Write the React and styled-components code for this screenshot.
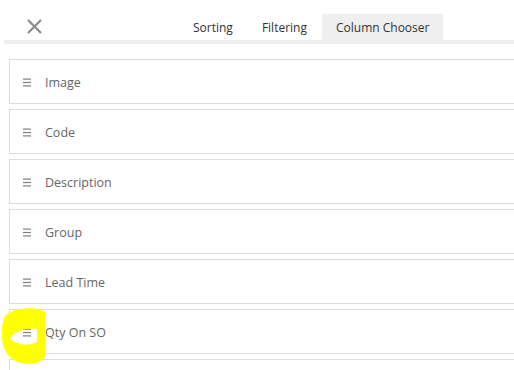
import React from 'react';
import styled, { createGlobalStyle } from 'styled-components';

const columns = ["Image", "Code", "Description", "Group", "Lead Time", "Qty On SO", ""];
const tabs = ["Sorting", "Filtering", "Column Chooser"];

const GlobalStyle = createGlobalStyle`
    body {
        margin: 0;
        background: #fff;
        font-family: "Open Sans", "Noto Sans", sans-serif;
    }
`

const Page = styled.div`
    position: relative;
    width: 514px;
    height: 370px;
    overflow: hidden;
`

const Header = styled.div`
    display: flex;
    align-items: flex-end;
    height: 40px;
    margin-left: 4px;
    border-bottom: 4px solid #efefef;
`

const CloseButton = styled.button`
    align-self: flex-start;
    margin: 19px 0 0 23px;
    padding: 0;
    width: 15px;
    height: 15px;
    border: none;
    background: none;
    display: flex;
`

const Tabs = styled.div`
    display: flex;
    gap: 1px;
    margin-left: 137px;
`

const Tab = styled.div`
    height: 25px;
    line-height: 25px;
    padding: 1px 14px 0;
    font-size: 12px;
    color: #333;
    background: ${p => p.active ? "#efefef" : "transparent"};
`

const List = styled.div`
    padding: 15px 0 0 9px;
`

const Row = styled.div`
    display: flex;
    align-items: center;
    box-sizing: border-box;
    width: 530px;
    height: 45px;
    margin-bottom: 5px;
    padding: 2px 0 0 13px;
    border: 1px solid #dcdcdc;
    font-size: 12.5px;
    color: #666;
`

const Handle = styled.svg`
    width: 8px;
    height: 9px;
    margin-right: 14px;
    flex-shrink: 0;
`

const Marker = styled.svg`
    position: absolute;
    left: 0;
    top: 300px;
    width: 60px;
    height: 70px;
    pointer-events: none;
`

const App = () => {
    return (<Page>
        <GlobalStyle />
        <Header>
            <CloseButton>
                <svg width="15" height="15" viewBox="0 0 15 15">
                    <path d="M1 1 L14 14 M14 1 L1 14" stroke="#8a8a8a" strokeWidth="2.2" />
                </svg>
            </CloseButton>
            <Tabs>
                {tabs.map(t => <Tab key={t} active={t === "Column Chooser"}>{t}</Tab>)}
            </Tabs>
        </Header>
        <List>
            {columns.map((c, i) => (
                <Row key={i}>
                    {c && <Handle viewBox="0 0 8 9">
                        <rect x="0" y="0.5" width="8" height="1.2" fill="#808080" />
                        <rect x="0" y="3.9" width="8" height="1.2" fill="#808080" />
                        <rect x="0" y="7.3" width="8" height="1.2" fill="#808080" />
                    </Handle>}
                    {c}
                </Row>
            ))}
        </List>
        <Marker viewBox="0 0 60 70">
            <path
                fillRule="evenodd"
                fill="#ffff00"
                d="M4 18 C10 7 38 6 45 12 L45 56 C43 65 20 67 11 58 C3 52 -1 36 4 18 Z
                   M10 38 C15 30 30 27 37 29 L37 42 C30 46 16 46 10 38 Z"
            />
        </Marker>
    </Page>);
}

export default App;
